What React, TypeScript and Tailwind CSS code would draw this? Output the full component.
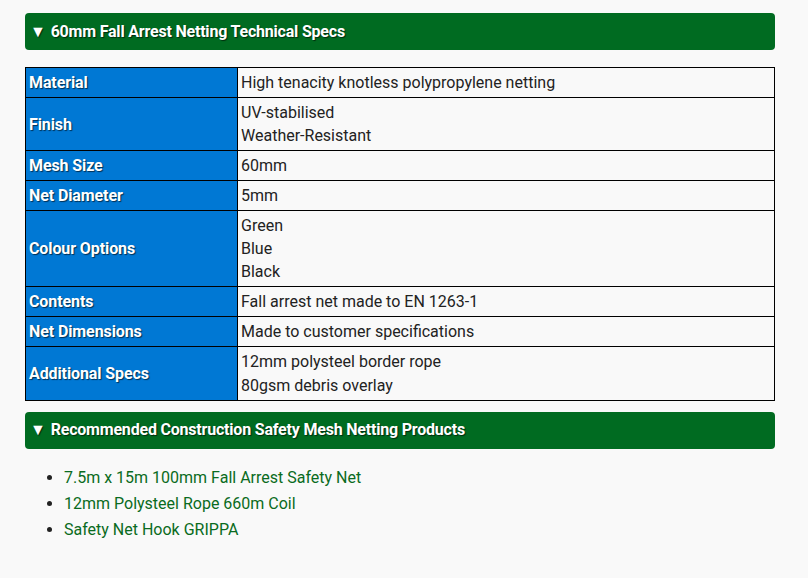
import React from "react";

const rows: { label: string; values: string[] }[] = [
  { label: "Material", values: ["High tenacity knotless polypropylene netting"] },
  { label: "Finish", values: ["UV-stabilised", "Weather-Resistant"] },
  { label: "Mesh Size", values: ["60mm"] },
  { label: "Net Diameter", values: ["5mm"] },
  { label: "Colour Options", values: ["Green", "Blue", "Black"] },
  { label: "Contents", values: ["Fall arrest net made to EN 1263-1"] },
  { label: "Net Dimensions", values: ["Made to customer specifications"] },
  { label: "Additional Specs", values: ["12mm polysteel border rope", "80gsm debris overlay"] },
];

const products = [
  "7.5m x 15m 100mm Fall Arrest Safety Net",
  "12mm Polysteel Rope 660m Coil",
  "Safety Net Hook GRIPPA",
];

function Header({ children }: { children: React.ReactNode }) {
  return (
    <div className="h-[37px] rounded-[4px] bg-[#006b21] flex items-center pl-[5px] text-white font-bold text-[16px] tracking-[-0.2px] [text-shadow:1px_1px_1px_rgba(0,0,0,0.6)]">
      <span className="mr-[5px] text-[16px]">▼</span>
      {children}
    </div>
  );
}

export default function App() {
  return (
    <div className="min-h-[578px] bg-[#f9f9f9] pt-[13px] font-['Roboto',sans-serif]">
      <div className="ml-[25px] w-[750px]">
        <Header>60mm Fall Arrest Netting Technical Specs</Header>
        <table className="mt-[17px] w-full border-collapse border border-black text-[16px] leading-[23.05px]">
          <tbody>
            {rows.map((r) => (
              <tr key={r.label}>
                <td className="w-[212px] border border-black bg-[#0078d4] px-[3px] py-[3px] align-middle font-bold text-white tracking-[-0.1px] [text-shadow:1px_1px_1px_rgba(0,0,0,0.6)]">
                  {r.label}
                </td>
                <td className="border border-black bg-[#f9f9f9] px-[3px] py-[3px] text-[#222]">
                  {r.values.map((v) => (
                    <div key={v}>{v}</div>
                  ))}
                </td>
              </tr>
            ))}
          </tbody>
        </table>
        <div className="mt-[11px]">
          <Header>Recommended Construction Safety Mesh Netting Products</Header>
        </div>
        <ul className="mt-[16px] list-disc pl-[39px] text-[16px] leading-[26px] text-[#0a6b21] marker:text-[#222]">
          {products.map((p) => (
            <li key={p}>{p}</li>
          ))}
        </ul>
      </div>
    </div>
  );
}
